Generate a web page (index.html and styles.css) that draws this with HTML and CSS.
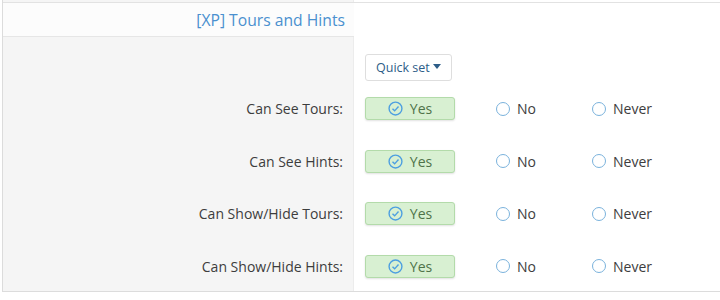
FILE: index.html
```html
<!DOCTYPE html>
<html lang="en">

<head>
    <meta charset="UTF-8">
    <title>[XP] Tours and Hints</title>
    <link rel="stylesheet" href="styles.css">
</head>

<body>
    <div class="block">
        <div class="top-strip">
            <div class="top-left"></div>
            <div class="top-right"></div>
        </div>
        <div class="block-header">
            <h2>[XP] Tours and Hints</h2>
        </div>
        <div class="form-body">
            <div class="label-cell first"></div>
            <div class="input-cell first">
                <button class="quick-set" type="button">Quick set <span class="caret"></span></button>
            </div>

            <div class="label-cell">Can See Tours:</div>
            <div class="input-cell">
                <span class="choice selected"><svg viewBox="0 0 14 14"><circle cx="7" cy="7" r="6" /><path d="M4.2 7.2l2 2 3.6-4" /></svg>Yes</span>
                <span class="choice"><i class="radio"></i>No</span>
                <span class="choice"><i class="radio"></i>Never</span>
            </div>

            <div class="label-cell">Can See Hints:</div>
            <div class="input-cell">
                <span class="choice selected"><svg viewBox="0 0 14 14"><circle cx="7" cy="7" r="6" /><path d="M4.2 7.2l2 2 3.6-4" /></svg>Yes</span>
                <span class="choice"><i class="radio"></i>No</span>
                <span class="choice"><i class="radio"></i>Never</span>
            </div>

            <div class="label-cell">Can Show/Hide Tours:</div>
            <div class="input-cell">
                <span class="choice selected"><svg viewBox="0 0 14 14"><circle cx="7" cy="7" r="6" /><path d="M4.2 7.2l2 2 3.6-4" /></svg>Yes</span>
                <span class="choice"><i class="radio"></i>No</span>
                <span class="choice"><i class="radio"></i>Never</span>
            </div>

            <div class="label-cell">Can Show/Hide Hints:</div>
            <div class="input-cell">
                <span class="choice selected"><svg viewBox="0 0 14 14"><circle cx="7" cy="7" r="6" /><path d="M4.2 7.2l2 2 3.6-4" /></svg>Yes</span>
                <span class="choice"><i class="radio"></i>No</span>
                <span class="choice"><i class="radio"></i>Never</span>
            </div>
        </div>
    </div>
</body>

</html>
```

FILE: styles.css
```css
body {
    margin: 0;
    font-family: "Open Sans", "Noto Sans", sans-serif;
    font-size: 14px;
    color: #3d3d3d;
    background-color: #fff;
}

.block {
    margin-left: 2px;
    border-left: 1px solid #dcdcdc;
}

.top-strip {
    display: grid;
    grid-template-columns: 351px 1fr;
    height: 2px;
    border-bottom: 1px solid #e2e2e2;
}

.top-left {
    background-color: #f5f5f5;
    border-right: 1px solid #ececec;
}

.block-header {
    height: 34px;
    border-bottom: 1px solid #e6e6e6;
    background-color: #fcfcfc;
    width: 351px;
    box-sizing: border-box;
    padding-right: 9px;
    text-align: right;
}

.block-header h2 {
    margin: 0;
    font-weight: normal;
    font-size: 15.7px;
    line-height: 35px;
    color: #4a90cf;
}

.form-body {
    display: grid;
    grid-template-columns: 351px 1fr;
    border-bottom: 1px solid #dcdcdc;
}

.label-cell {
    background-color: #f5f5f5;
    border-right: 1px solid #ececec;
    text-align: right;
    padding: 16px 10px 13.5px 0;
    line-height: 23px;
}

.input-cell {
    padding: 16px 0 13.5px 11px;
    display: flex;
    align-items: center;
}

.label-cell.first,
.input-cell.first {
    padding-top: 17px;
    padding-bottom: 0;
}

.quick-set {
    height: 27px;
    padding: 0 10px;
    border: 1px solid #dedede;
    border-radius: 3px;
    background-color: #fff;
    color: #2d5d88;
    font-family: inherit;
    font-size: 12.5px;
    display: flex;
    align-items: center;
    gap: 3px;
}

.caret {
    border-top: 5px solid #2d5d88;
    border-left: 4px solid transparent;
    border-right: 4px solid transparent;
    margin-top: -2px;
}

.choice {
    display: inline-flex;
    align-items: center;
    height: 23px;
    width: 96px;
}

.choice.selected {
    width: 90px;
    box-sizing: border-box;
    justify-content: center;
    margin-right: 41px;
    background-color: #d8f0d2;
    border: 1px solid #b3dbaa;
    border-radius: 3px;
    box-shadow: 0 1px 2px rgba(0, 0, 0, 0.12);
    color: #4f7349;
}

.choice svg {
    width: 15px;
    height: 15px;
    margin-right: 7px;
    fill: none;
    stroke: #4d9fe0;
    stroke-width: 1.3;
}

.radio {
    width: 14px;
    height: 14px;
    box-sizing: border-box;
    border: 1.6px solid #7ab2dc;
    border-radius: 50%;
    background-color: #fff;
    margin-right: 7px;
}
```
